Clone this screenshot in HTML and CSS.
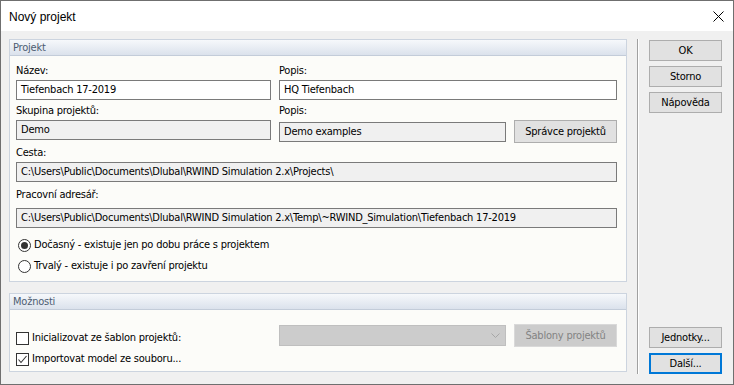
FILE: index.html
```html
<!DOCTYPE html>
<html lang="cs">
<head>
    <meta charset="UTF-8">
    <title>Nový projekt</title>
    <link rel="stylesheet" href="styles.css">
</head>
<body>
    <div class="dialog">
        <div class="titlebar">
            <span class="title">Nový projekt</span>
            <svg class="close" width="11" height="11" viewBox="0 0 11 11">
                <path d="M0.5 0.5 L10.5 10.5 M10.5 0.5 L0.5 10.5" stroke="#000" stroke-width="1" fill="none"/>
            </svg>
        </div>
        <div class="content">
            <div class="left">
                <div class="group group-project">
                    <div class="group-head">Projekt</div>
                    <div class="group-body">
                        <div class="row">
                            <div class="col-a">
                                <div class="label">Název:</div>
                                <div class="edit">Tiefenbach 17-2019</div>
                            </div>
                            <div class="col-b">
                                <div class="label">Popis:</div>
                                <div class="edit">HQ Tiefenbach</div>
                            </div>
                        </div>
                        <div class="row row-second">
                            <div class="col-a">
                                <div class="label">Skupina projektů:</div>
                                <div class="edit readonly">Demo</div>
                            </div>
                            <div class="col-b">
                                <div class="label">Popis:</div>
                                <div class="inline">
                                    <div class="edit readonly short">Demo examples</div>
                                    <div class="btn btn-side">Správce projektů</div>
                                </div>
                            </div>
                        </div>
                        <div class="label label-path">Cesta:</div>
                        <div class="edit readonly">C:\Users\Public\Documents\Dlubal\RWIND Simulation 2.x\Projects\</div>
                        <div class="label label-work">Pracovní adresář:</div>
                        <div class="edit readonly edit-work">C:\Users\Public\Documents\Dlubal\RWIND Simulation 2.x\Temp\~RWIND_Simulation\Tiefenbach 17-2019</div>
                        <div class="option option-first">
                            <span class="radio checked"></span>
                            <span>Dočasný - existuje jen po dobu práce s projektem</span>
                        </div>
                        <div class="option">
                            <span class="radio"></span>
                            <span>Trvalý - existuje i po zavření projektu</span>
                        </div>
                    </div>
                </div>
                <div class="group group-options">
                    <div class="group-head">Možnosti</div>
                    <div class="group-body">
                        <div class="row row-templates">
                            <div class="option check-first">
                                <span class="check"></span>
                                <span>Inicializovat ze šablon projektů:</span>
                            </div>
                            <div class="inline">
                                <div class="combo">
                                    <svg width="9" height="5" viewBox="0 0 9 5">
                                        <path d="M0.5 0.5 L4.5 4.5 L8.5 0.5" stroke="#a6a6a6" fill="none"/>
                                    </svg>
                                </div>
                                <div class="btn btn-side disabled">Šablony projektů</div>
                            </div>
                        </div>
                        <div class="option">
                            <span class="check">
                                <svg width="11" height="11" viewBox="0 0 11 11">
                                    <path d="M1.5 5.5 L4 8.5 L9.5 2" stroke="#333" stroke-width="1.1" fill="none"/>
                                </svg>
                            </span>
                            <span>Importovat model ze souboru...</span>
                        </div>
                    </div>
                </div>
            </div>
            <div class="separator"></div>
            <div class="right">
                <div class="btn">OK</div>
                <div class="btn">Storno</div>
                <div class="btn">Nápověda</div>
                <div class="spacer"></div>
                <div class="btn">Jednotky...</div>
                <div class="btn default">Další...</div>
            </div>
        </div>
    </div>
</body>
</html>
```

FILE: styles.css
```css
body {
    margin: 0;
    background: #2b3a40;
    font-family: 'DejaVu Sans Condensed', 'Liberation Sans', sans-serif;
    font-size: 11px;
    letter-spacing: -0.22px;
    color: #000;
}
.dialog {
    width: 732px;
    height: 383px;
    border: 1px solid #6f6f6f;
    background: #f0f0f0;
    display: flex;
    flex-direction: column;
}
.titlebar {
    height: 30px;
    background: #fff;
    display: flex;
    align-items: center;
    justify-content: space-between;
    padding: 0 9px 0 8px;
}
.title {
    font-family: 'Liberation Sans', Arial, sans-serif;
    font-size: 12px;
    letter-spacing: 0;
    margin-top: 1px;
}
.content {
    flex: 1;
    display: flex;
    padding: 8px 0 0 8px;
}
.left {
    width: 618px;
    display: flex;
    flex-direction: column;
    gap: 11px;
}
.group {
    border: 1px solid #ccd4df;
    display: flex;
    flex-direction: column;
}
.group-project {
    height: 241px;
}
.group-options {
    height: 77px;
}
.group-head {
    height: 15px;
    line-height: 15px;
    padding-left: 3px;
    color: #4d5d72;
    background: linear-gradient(to bottom, #f6f8fb, #dbe2ec);
    border-bottom: 1px solid #c3ccd9;
}
.group-body {
    flex: 1;
    background: #fcfcf9;
    padding: 7px 9px 0 6px;
}
.row {
    display: flex;
    gap: 8px;
}
.col-a {
    width: 255px;
}
.col-b {
    width: 338px;
}
.label {
    height: 16px;
    line-height: 16px;
    margin-bottom: 1px;
}
.row-second {
    margin-top: 3px;
}
.row-second .col-a .edit {
    margin-top: 1px;
}
.label-path {
    margin-top: 2px;
}
.label-work {
    margin-top: 5px;
    margin-bottom: 5px;
}
.edit {
    height: 18px;
    line-height: 18px;
    border: 1px solid #7a7a7a;
    background: #fff;
    padding: 0 4px;
    white-space: nowrap;
    overflow: hidden;
}
.edit.readonly {
    background: #f0f0f0;
}
.inline {
    display: flex;
    align-items: center;
    gap: 8px;
}
.edit.short {
    width: 217px;
}
.btn {
    box-sizing: border-box;
    height: 21px;
    line-height: 19px;
    border: 1px solid #adadad;
    background: #e1e1e1;
    text-align: center;
}
.btn-side {
    width: 103px;
    height: 23px;
    line-height: 21px;
}
.btn.disabled {
    background: #cccccc;
    border-color: #d9d9d9;
    color: #838383;
}
.option {
    display: flex;
    align-items: center;
    height: 16px;
    line-height: 16px;
    gap: 3px;
}
.option-first {
    margin-top: 9px;
    margin-bottom: 5px;
}
.option-first, .option-first + .option {
    padding-left: 2px;
}
.radio {
    box-sizing: border-box;
    width: 13px;
    height: 13px;
    border: 1px solid #333;
    border-radius: 50%;
    background: #fff;
    display: flex;
    align-items: center;
    justify-content: center;
}
.radio.checked::after {
    content: "";
    width: 7px;
    height: 7px;
    border-radius: 50%;
    background: #333;
}
.check {
    box-sizing: border-box;
    width: 13px;
    height: 13px;
    border: 1px solid #333;
    background: #fff;
    display: flex;
    align-items: center;
    justify-content: center;
}
.row-templates {
    justify-content: space-between;
    align-items: flex-start;
    padding-top: 7px;
    margin-bottom: 4px;
}
.check-first {
    margin-top: 6px;
}
.combo {
    box-sizing: border-box;
    width: 227px;
    height: 21px;
    border: 1px solid #bfbfbf;
    background: #cccccc;
    display: flex;
    align-items: center;
    justify-content: flex-end;
    padding-right: 5px;
}
.separator {
    width: 1px;
    margin: 0 0 10px 10px;
    background: #a0a0a0;
    border-right: 1px solid #fff;
}
.right {
    width: 73px;
    margin-left: 10px;
    padding-top: 1px;
    padding-bottom: 10px;
    display: flex;
    flex-direction: column;
    gap: 5px;
}
.spacer {
    flex: 1;
}
.btn.default {
    border: 2px solid #0078d7;
    line-height: 17px;
}
```
